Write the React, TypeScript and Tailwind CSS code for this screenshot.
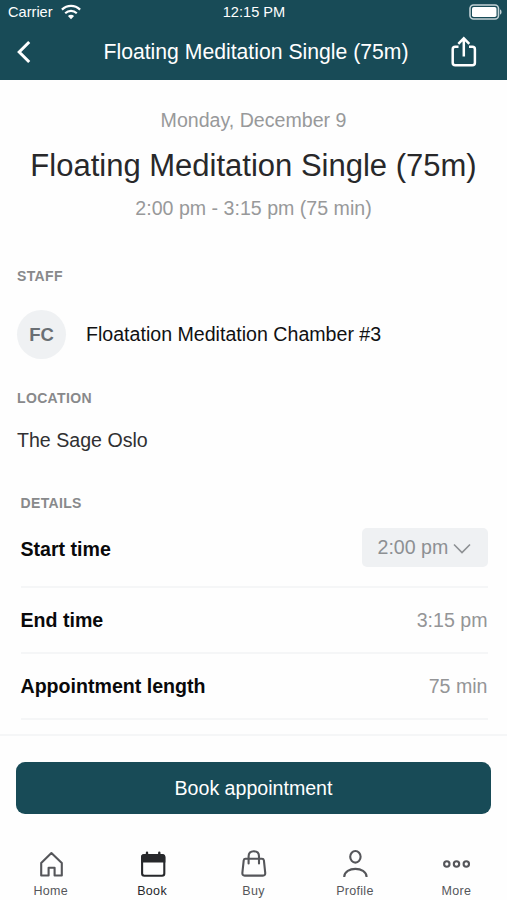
import React from 'react';
import { clsx } from 'clsx';

interface DetailRow {
  label: string;
  value: string;
  select?: boolean;
}

const DETAILS: DetailRow[] = [
  { label: 'Start time', value: '2:00 pm', select: true },
  { label: 'End time', value: '3:15 pm' },
  { label: 'Appointment length', value: '75 min' },
];

const HomeIcon = () => (
  <path d="M5.2 26.5V14L15.4 4L25.8 14V26.5H18.6V18.7H12.6V26.5Z" strokeLinejoin="round" />
);

const BookIcon = () => (
  <>
    <rect x="5.1" y="6.2" width="22.2" height="20.6" rx="2.2" />
    <path d="M5.1 12.4V8.2Q5.1 6 7.3 6H25.1Q27.3 6 27.3 8.2V12.4Z" fill="currentColor" />
    <path d="M10 3.8V6M22.3 3.8V6" strokeWidth="2.4" strokeLinecap="round" />
  </>
);

const BuyIcon = () => (
  <>
    <path d="M7.4 9.8H24Q25.6 9.8 25.9 11.4L27.2 23.7Q27.5 26.6 24.9 26.6H6.7Q4.1 26.6 4.4 23.7L5.7 11.4Q6 9.8 7.4 9.8Z" />
    <path d="M10.6 14.4V7.4Q10.6 2.3 15.8 2.3Q21 2.3 21 7.4V14.4" strokeLinecap="round" />
  </>
);

const ProfileIcon = () => (
  <>
    <ellipse cx="15.4" cy="7.8" rx="5.2" ry="5.8" />
    <path d="M4.2 28C4.4 17.2 26.4 17.2 26.6 28" />
  </>
);

const MoreIcon = () => (
  <>
    <circle cx="5.8" cy="15" r="2.7" />
    <circle cx="15.5" cy="15" r="2.7" />
    <circle cx="25.3" cy="15" r="2.7" />
  </>
);

const TABS = [
  { label: 'Home', icon: HomeIcon },
  { label: 'Book', icon: BookIcon, active: true },
  { label: 'Buy', icon: BuyIcon },
  { label: 'Profile', icon: ProfileIcon },
  { label: 'More', icon: MoreIcon },
];

function StatusBar() {
  return (
    <div className="grid h-6 grid-cols-3 items-center pl-2 pr-[5px] text-[14.6px] leading-6">
      <div className="flex items-center gap-2">
        <span>Carrier</span>
        <svg width="20" height="16" viewBox="0 0 20 16" fill="none" stroke="currentColor" strokeWidth="2.2">
          <path d="M0.9 5.6C6.2 0.7 13.8 0.7 19.1 5.6" />
          <path d="M4.2 9.2C7.6 6.1 12.4 6.1 15.8 9.2" />
          <path d="M6.9 12.1Q10 9.5 13.1 12.1L10 15.2Z" fill="currentColor" stroke="none" />
        </svg>
      </div>
      <span className="pr-0.5 text-center">12:15 PM</span>
      <svg className="justify-self-end" width="33" height="16" viewBox="0 0 33 16" fill="none">
        <rect x="1" y="1" width="28.5" height="14" rx="3.5" stroke="#c3d2d6" strokeWidth="1.6" />
        <rect x="3" y="3" width="24.5" height="10" rx="1.8" fill="white" />
        <path d="M31 5.2Q32.6 6 32.6 8Q32.6 10 31 10.8Z" fill="#c3d2d6" />
      </svg>
    </div>
  );
}

function SectionLabel({ children }: { children: React.ReactNode }) {
  return (
    <h3 className="text-[14px] font-bold uppercase leading-4 tracking-[0.35px] text-[#88898b]">{children}</h3>
  );
}

export default function App() {
  return (
    <div className="flex h-[900px] w-[507px] flex-col overflow-hidden bg-[#fefefe] font-['Liberation_Sans',Arial,sans-serif] text-[19.6px]">
      <header className="h-20 shrink-0 bg-[#184b57] text-white">
        <StatusBar />
        <div className="flex h-14 items-center justify-between pl-4 pr-[29px]">
          <button className="w-[46px]">
            <svg width="16" height="24" viewBox="0 0 16 24" fill="none" stroke="currentColor" strokeWidth="3">
              <path d="M13.2 2L3.2 12L13.2 22" />
            </svg>
          </button>
          <h1 className="text-[21.2px] leading-7">Floating Meditation Single (75m)</h1>
          <button>
            <svg width="28" height="32" viewBox="0 0 28 32" fill="none" stroke="currentColor" strokeWidth="2.5">
              <path d="M8.5 10.7H5.2Q2.7 10.7 2.7 13.2V26.8Q2.7 29.3 5.2 29.3H22.4Q24.9 29.3 24.9 26.8V13.2Q24.9 10.7 22.4 10.7H19" />
              <path d="M13.8 20.5V2.8M8.3 7.8L13.8 2.3L19.3 7.8" />
            </svg>
          </button>
        </div>
      </header>

      <main className="min-h-0 flex-1 overflow-hidden">
        <section className="flex flex-col items-center pt-7 text-[#98999a]">
          <p className="leading-6">Monday, December 9</p>
          <h2 className="mt-4 text-[31px] leading-9 text-[#28282a]">Floating Meditation Single (75m)</h2>
          <p className="mt-3 leading-6">2:00 pm - 3:15 pm (75 min)</p>
        </section>

        <section className="px-[17px] pt-12">
          <SectionLabel>Staff</SectionLabel>
          <div className="mt-[26px] flex items-center gap-5">
            <div className="flex size-[49px] items-center justify-center rounded-full bg-[#eff1f3] text-[18.5px] font-bold text-[#6a6f74]">
              FC
            </div>
            <span className="text-[#111112]">Floatation Meditation Chamber #3</span>
          </div>
        </section>

        <section className="px-[17px] pt-[31px]">
          <SectionLabel>Location</SectionLabel>
          <p className="mt-[22px] leading-6 text-[#303032]">The Sage Oslo</p>
        </section>

        <section className="pl-[20.5px] pr-[19.5px] pt-[43px]">
          <SectionLabel>Details</SectionLabel>
          <ul>
            {DETAILS.map((row) => (
              <li
                key={row.label}
                className={clsx(
                  'flex items-center justify-between border-b-2 border-[#f5f6f7]',
                  row.select ? 'h-[77px]' : 'h-[66px] pt-px'
                )}
              >
                <span className={clsx('font-bold text-[#09090a]', row.select && 'pt-[3px]')}>{row.label}</span>
                {row.select ? (
                  <button className="mb-[3px] flex h-[39px] w-[126px] items-center gap-[5px] rounded-[5px] bg-[#eff1f3] pl-4 pt-0.5 text-[#8d9093]">
                    {row.value}
                    <svg width="18" height="12" viewBox="0 0 18 12" fill="none" stroke="currentColor" strokeWidth="1.6">
                      <path d="M1 2.5L9 10.5L17 2.5" />
                    </svg>
                  </button>
                ) : (
                  <span className="text-[#949597]">{row.value}</span>
                )}
              </li>
            ))}
          </ul>
        </section>
      </main>

      <footer className="h-[166px] shrink-0 border-t-2 border-[#f5f6f7]">
        <div className="px-4 pt-[26px]">
          <button className="h-[52px] w-full rounded-[9px] bg-[#184b57] pt-px text-white">Book appointment</button>
        </div>
        <nav className="mt-[35px] grid grid-cols-5">
          {TABS.map(({ label, icon: Icon, active }) => (
            <button
              key={label}
              className={clsx('flex flex-col items-center', active ? 'text-[#27282b]' : 'text-[#55565a]')}
            >
              <svg width="30" height="30" viewBox="0 0 30 30" fill="none" stroke="currentColor" strokeWidth="2.1" overflow="visible">
                <Icon />
              </svg>
              <span className="mt-1 text-[12.5px] leading-4 tracking-[0.3px]">{label}</span>
            </button>
          ))}
        </nav>
      </footer>
    </div>
  );
}
